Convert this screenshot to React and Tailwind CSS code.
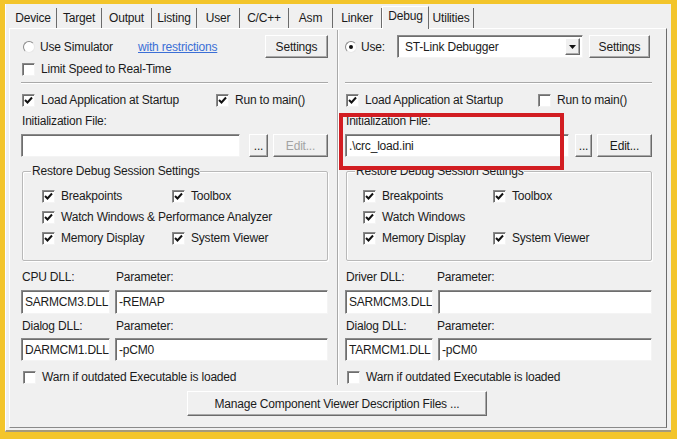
import React from 'react'

const RAISED =
  'border border-t-white border-l-white border-r-[#6b6b6b] border-b-[#6b6b6b] shadow-[inset_-1px_-1px_0_#a9a9a9] bg-[#f0f0f0]'
const SUNKEN =
  'border border-t-[#8a8a8a] border-l-[#8a8a8a] border-r-[#f4f4f4] border-b-[#f4f4f4] shadow-[inset_1px_1px_0_#6e6e6e] bg-white'

function CheckBox({ checked }) {
  return (
    <span className={`w-[13px] h-[13px] shrink-0 flex items-center justify-center ${SUNKEN}`}>
      {checked && (
        <svg width="9" height="9" viewBox="0 0 9 9">
          <path d="M1 4 L3.5 6.5 L8 1.5" fill="none" stroke="#111" strokeWidth="2" />
        </svg>
      )}
    </span>
  )
}

function Check({ checked, label, className = '' }) {
  return (
    <div className={`flex items-center h-[14px] gap-[6px] ${className}`}>
      <CheckBox checked={checked} />
      <span className="whitespace-nowrap">{label}</span>
    </div>
  )
}

function Radio({ checked }) {
  return (
    <span className="w-[12px] h-[12px] shrink-0 rounded-full border border-t-[#8a8a8a] border-l-[#8a8a8a] border-r-[#e8e8e8] border-b-[#e8e8e8] bg-white flex items-center justify-center">
      {checked && <span className="w-[4px] h-[4px] rounded-full bg-[#111]" />}
    </span>
  )
}

function Button({ children, className = '', disabled }) {
  return (
    <div className={`flex items-center justify-center ${RAISED} ${disabled ? 'text-[#a3a3a3]' : ''} ${className}`}>
      {children}
    </div>
  )
}

function Field({ value, className = '' }) {
  return (
    <div className={`flex items-center pl-[3px] whitespace-nowrap overflow-hidden ${SUNKEN} ${className}`}>
      {value}
    </div>
  )
}

function GroupBox({ title, children, className = '' }) {
  return (
    <div className={`relative border border-[#b9b9b9] shadow-[inset_1px_1px_0_#fff,1px_1px_0_#fff] rounded-[2px] ${className}`}>
      <span className="absolute -top-[8px] left-[8px] px-[1px] bg-[#f0f0f0] leading-[14px] whitespace-nowrap">{title}</span>
      {children}
    </div>
  )
}

const tabs = [
  ['Device', 47],
  ['Target', 45],
  ['Output', 50],
  ['Listing', 45],
  ['User', 43],
  ['C/C++', 49],
  ['Asm', 44],
  ['Linker', 49],
  ['Debug', 47],
  ['Utilities', 45],
]

function DebugColumn({ left }) {
  const s = left
  return (
    <div className="flex flex-col">
      {/* row 1: simulator / driver */}
      {s ? (
        <div className="flex items-center h-[23px] mt-[6px]">
          <div className="ml-[2px] flex items-center gap-[5px] w-[115px]">
            <Radio />
            <span>Use Simulator</span>
          </div>
          <span className="text-[#3b6fd6] underline w-[127px]">with restrictions</span>
          <Button className="w-[63px] h-[23px]">Settings</Button>
        </div>
      ) : (
        <div className="flex items-center h-[23px] mt-[6px]">
          <div className="flex items-center gap-[4px] w-[52px]">
            <Radio checked />
            <span>Use:</span>
          </div>
          <div className={`w-[186px] h-[23px] flex items-center justify-between pl-[7px] pr-[2px] ${SUNKEN}`}>
            <span>ST-Link Debugger</span>
            <span className={`w-[15px] h-[17px] flex items-center justify-center ${RAISED}`}>
              <svg width="7" height="4" viewBox="0 0 7 4">
                <path d="M0 0 H7 L3.5 4 Z" fill="#111" />
              </svg>
            </span>
          </div>
          <Button className="ml-[6px] w-[61px] h-[23px]">Settings</Button>
        </div>
      )}

      <div className="h-[14px] mt-[4px] ml-[1px]">
        {s && <Check label="Limit Speed to Real-Time" />}
      </div>

      <div className="mt-[6px] h-[2px] border-t border-t-[#a9a9a9] border-b border-b-white" />

      <div className="flex mt-[9px] ml-[1px]">
        <Check checked label="Load Application at Startup" className={s ? 'w-[194px]' : 'w-[192px]'} />
        <Check checked={s} label="Run to main()" />
      </div>

      <div className="mt-[7px] ml-[1px] h-[14px] leading-[14px]">Initialization File:</div>

      <div className="flex mt-[6px] h-[23px]">
        <Field value={s ? '' : '.\\crc_load.ini'} className={s ? 'w-[219px]' : 'w-[224px]'} />
        <Button className={s ? 'ml-[9px] w-[19px]' : 'ml-[6px] w-[17px]'}>...</Button>
        <Button disabled={s} className="ml-[5px] w-[55px]">Edit...</Button>
      </div>

      <GroupBox title="Restore Debug Session Settings" className="mt-[14px] ml-[1px] pt-[17px] pb-[14px] h-[90px]">
        <div className={`flex ${s ? 'pl-[19px]' : 'pl-[16px]'}`}>
          <Check checked label="Breakpoints" className="w-[130px]" />
          <Check checked label="Toolbox" />
        </div>
        <div className={`flex mt-[7px] ${s ? 'pl-[19px]' : 'pl-[16px]'}`}>
          <Check checked label={s ? 'Watch Windows & Performance Analyzer' : 'Watch Windows'} />
        </div>
        <div className={`flex mt-[7px] ${s ? 'pl-[19px]' : 'pl-[16px]'}`}>
          <Check checked label="Memory Display" className="w-[130px]" />
          <Check checked label="System Viewer" />
        </div>
      </GroupBox>

      <div className="flex mt-[9px] h-[14px] leading-[14px] ml-[1px]">
        <span className={s ? 'w-[94px]' : 'w-[91px]'}>{s ? 'CPU DLL:' : 'Driver DLL:'}</span>
        <span>Parameter:</span>
      </div>
      <div className="flex mt-[6px] h-[24px]">
        <Field value="SARMCM3.DLL" className={s ? 'w-[89px]' : 'w-[88px]'} />
        <Field value={s ? '-REMAP' : ''} className="ml-[5px] flex-1" />
      </div>

      <div className="flex mt-[5px] h-[14px] leading-[14px] ml-[1px]">
        <span className={s ? 'w-[94px]' : 'w-[91px]'}>Dialog DLL:</span>
        <span>Parameter:</span>
      </div>
      <div className="flex mt-[5px] h-[23px]">
        <Field value={s ? 'DARMCM1.DLL' : 'TARMCM1.DLL'} className={s ? 'w-[89px]' : 'w-[88px]'} />
        <Field value="-pCM0" className="ml-[5px] flex-1" />
      </div>

      <Check label="Warn if outdated Executable is loaded" className="mt-[9px] ml-[2px]" />
    </div>
  )
}

export default function App() {
  return (
    <div className="w-[677px] h-[439px] bg-[#f3c52b] pt-[4px] pl-[5px] pr-[6px] pb-[7px] font-['Liberation_Sans',Arial,sans-serif] text-[12px] tracking-[-0.2px] text-[#1b1b1b]">
      <div className="h-full bg-[#f0f0f0] border-l border-l-white border-b-2 border-b-[#a59a7c] flex flex-col pl-[3px] pr-[4px] pt-[2px]">
        {/* tab strip */}
        <div className="flex items-end h-[22px] pl-[1px]">
          {tabs.map(([name, w]) =>
            name === 'Debug' ? (
              <div
                key={name}
                style={{ width: w }}
                className="relative z-10 -mb-[1px] h-[23px] pb-[4px] flex items-center justify-center bg-[#f0f0f0] border-t border-l border-t-white border-l-white border-r border-r-[#6b6b6b]"
              >
                {name}
              </div>
            ) : (
              <div
                key={name}
                style={{ width: w }}
                className="h-[20px] flex items-center justify-center border-r border-r-[#6b6b6b]"
              >
                {name}
              </div>
            )
          )}
        </div>

        {/* tab panel */}
        <div className="relative flex-1 mb-[2px] flex flex-col border border-t-white border-l-white border-r-[#6b6b6b] border-b-[#8a8a8a]">
          <div className="flex">
            <div className="w-[327px] pl-[11px] pr-[9px]">
              <DebugColumn left />
            </div>
            <div className="w-[2px] mt-[1px] h-[355px] border-l border-l-[#a9a9a9] border-r border-r-white" />
            <div className="flex-1 pl-[6px] pr-[16px]">
              <DebugColumn left={false} />
            </div>
          </div>

          <div className="flex justify-center pr-[2px] mt-[6px]">
            <Button className="w-[300px] h-[25px]">Manage Component Viewer Description Files ...</Button>
          </div>

          {/* red highlight annotation */}
          <div className="absolute left-[329px] top-[84px] w-[225px] h-[57px] border-[4px] border-[#d21d22]" />
        </div>
      </div>
    </div>
  )
}
